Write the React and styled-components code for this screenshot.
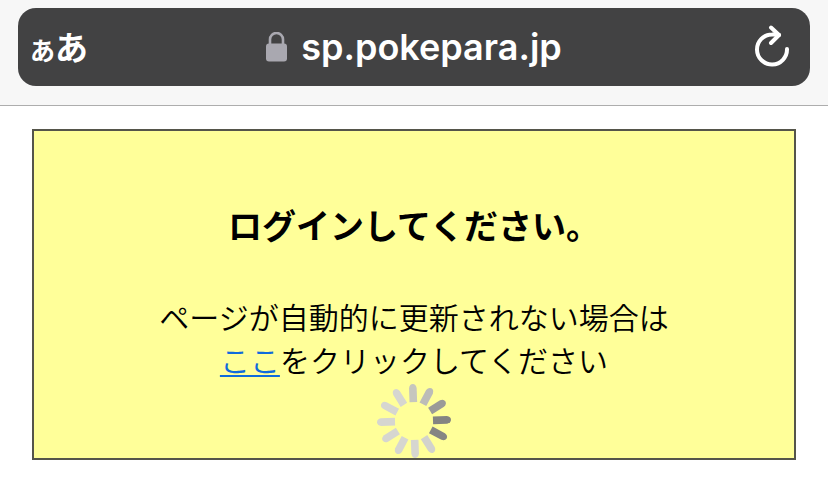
import React from "react";
import styled, { createGlobalStyle } from "styled-components";

const GlobalStyle = createGlobalStyle`
	* {
		box-sizing: border-box;
	}

	body {
		margin: 0;
		background: #fff;
		color: #000;
		font-family: "Liberation Sans", "Noto Sans CJK JP", sans-serif;
	}
`;

const BrowserHeader = styled.header`
	padding: 8px 18px 19px;
	background: #f7f7f7;
	border-bottom: 1px solid #adadad;
`;

const AddressBar = styled.div`
	display: grid;
	grid-template-columns: 1fr auto 1fr;
	align-items: center;
	height: 78px;
	padding: 0 12px;
	border-radius: 18px;
	background: #424243;
	color: #fff;
`;

const BarButton = styled.button`
	display: flex;
	align-items: baseline;
	justify-self: ${(props) => props.$side};
	padding: 0;
	border: none;
	background: none;
	color: inherit;
	font-family: "Noto Sans CJK JP", sans-serif;
	font-weight: 700;
	line-height: 40px;
	cursor: pointer;
`;

const SmallKana = styled.span`
	font-size: 25px;
`;

const LargeKana = styled.span`
	font-size: 33px;
`;

const Address = styled.div`
	display: flex;
	align-items: center;
	gap: 14px;
	font-family: Inter, sans-serif;
	font-size: 36px;
	font-weight: 600;
	line-height: 48px;
`;

const Page = styled.main`
	padding: 23px 32px;
`;

const NoticeBox = styled.section`
	display: flex;
	flex-direction: column;
	align-items: center;
	padding-top: 68px;
	border: 2px solid #55554a;
	background: #ffff99;
	text-align: center;
`;

const Title = styled.h1`
	margin: 0 0 44px;
	font-family: "Noto Sans CJK JP", sans-serif;
	font-size: 34px;
	font-weight: 700;
	line-height: 52px;
`;

const Message = styled.p`
	margin: 0 0 2px;
	font-family: "Noto Sans CJK JP", sans-serif;
	font-size: 30px;
	font-weight: 350;
	line-height: 43px;
`;

const RefreshLink = styled.a`
	color: #0f6bdc;
	text-decoration-thickness: 2px;
	text-underline-offset: 3px;
`;

const Spinner = styled.svg`
	display: block;
`;

const SPOKES = [
	"#c6c6be",
	"#bcbcb8",
	"#9a9a98",
	"#848482",
	"#858583",
	"#d2d2cc",
	"#d6d6d0",
	"#d6d6d0",
	"#d6d6d0",
	"#d6d6d0",
	"#d6d6d0",
	"#d6d6d0",
];

function LockIcon() {
	return (
		<svg width="21" height="30" viewBox="0 0 21 30" aria-hidden="true">
			<rect x="0" y="11.500" width="21" height="18" rx="3" fill="#a9a8b0" />
			<path d="M4 13V7.500a6.500 6.500 0 0 1 13 0V13" fill="none" stroke="#a9a8b0" strokeWidth="2.600" />
		</svg>
	);
}

function ReloadIcon() {
	return (
		<svg
			width="44"
			height="44"
			viewBox="0 0 44 44"
			fill="none"
			stroke="currentColor"
			strokeWidth="4"
			strokeLinecap="round"
			strokeLinejoin="round"
			aria-hidden="true"
		>
			<path d="M33 24A15 15 0 1 1 18 9.500Q22 9.300 25 10" />
			<path d="M17 2.500L25 10L17 18" />
		</svg>
	);
}

function LoadingSpinner() {
	return (
		<Spinner width="76" height="75" viewBox="0 0 76 75" role="img" aria-label="読み込み中">
			{SPOKES.map((color, idx) => (
				<path
					key={idx}
					d="M34.200 19V5Q35 1 38 1Q41 1 41.800 5V19Z"
					fill={color}
					transform={`rotate(${idx * 30 - 2} 38 38)`}
				/>
			))}
		</Spinner>
	);
}

function App() {
	return (
		<>
			<GlobalStyle />
			<BrowserHeader>
				<AddressBar>
					<BarButton type="button" $side="start">
						<SmallKana>あ</SmallKana>
						<LargeKana>あ</LargeKana>
					</BarButton>
					<Address>
						<LockIcon />
						<span>sp.pokepara.jp</span>
					</Address>
					<BarButton type="button" $side="end" aria-label="再読み込み">
						<ReloadIcon />
					</BarButton>
				</AddressBar>
			</BrowserHeader>
			<Page>
				<NoticeBox>
					<Title>ログインしてください。</Title>
					<Message>
						ページが自動的に更新されない場合は
						<br />
						<RefreshLink href="#">ここ</RefreshLink>をクリックしてください
					</Message>
					<LoadingSpinner />
				</NoticeBox>
			</Page>
		</>
	);
}

export default App;
